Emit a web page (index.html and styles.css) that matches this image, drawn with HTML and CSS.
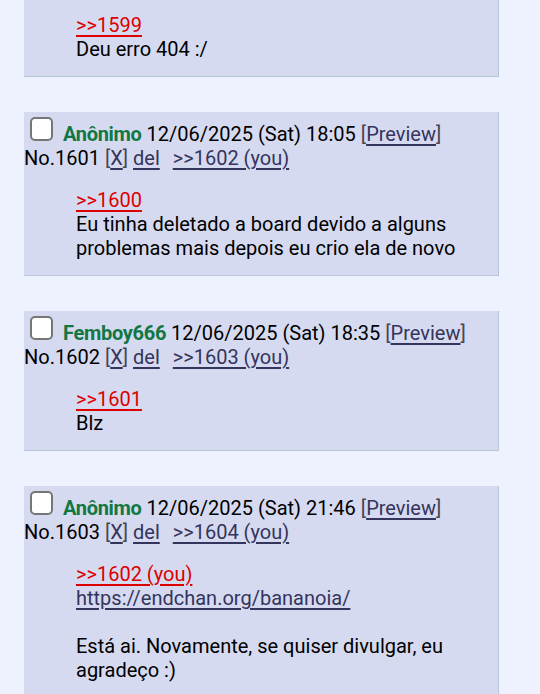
FILE: index.html
```html
<!DOCTYPE html>
<html lang="pt">
<head>
    <meta charset="UTF-8">
    <meta name="viewport" content="width=device-width, initial-scale=1.0">
    <title>/bananoia/ - Thread</title>
    <link rel="stylesheet" href="styles.css">
</head>
<body>
    <div class="thread">
        <div class="post-container">
            <div class="reply">
                <div class="post-info">
                    <input type="checkbox" class="post-check">
                    <span class="name">Anônimo</span>
                    <span class="date">12/06/2025 (Sat) 17:58</span>
                    <span class="bracket">[<a href="#">Preview</a>]</span>
                    <br>
                    <span class="post-num">No.1600</span>
                    <span class="bracket">[<a href="#">X</a>]</span>
                    <a href="#">del</a>
                    <span class="backlinks"><a href="#">&gt;&gt;1601</a></span>
                </div>
                <blockquote class="post-message">
                    <a href="#" class="quotelink">&gt;&gt;1599</a><br>
                    Deu erro 404 :/
                </blockquote>
            </div>
        </div>

        <div class="post-container">
            <div class="reply">
                <div class="post-info">
                    <input type="checkbox" class="post-check">
                    <span class="name">Anônimo</span>
                    <span class="date">12/06/2025 (Sat) 18:05</span>
                    <span class="bracket">[<a href="#">Preview</a>]</span>
                    <br>
                    <span class="post-num">No.1601</span>
                    <span class="bracket">[<a href="#">X</a>]</span>
                    <a href="#">del</a>
                    <span class="backlinks"><a href="#">&gt;&gt;1602 (you)</a></span>
                </div>
                <blockquote class="post-message">
                    <a href="#" class="quotelink">&gt;&gt;1600</a><br>
                    Eu tinha deletado a board devido a alguns problemas mais depois eu crio ela de novo
                </blockquote>
            </div>
        </div>

        <div class="post-container">
            <div class="reply">
                <div class="post-info">
                    <input type="checkbox" class="post-check">
                    <span class="name">Femboy666</span>
                    <span class="date">12/06/2025 (Sat) 18:35</span>
                    <span class="bracket">[<a href="#">Preview</a>]</span>
                    <br>
                    <span class="post-num">No.1602</span>
                    <span class="bracket">[<a href="#">X</a>]</span>
                    <a href="#">del</a>
                    <span class="backlinks"><a href="#">&gt;&gt;1603 (you)</a></span>
                </div>
                <blockquote class="post-message">
                    <a href="#" class="quotelink">&gt;&gt;1601</a><br>
                    Blz
                </blockquote>
            </div>
        </div>

        <div class="post-container">
            <div class="reply">
                <div class="post-info">
                    <input type="checkbox" class="post-check">
                    <span class="name">Anônimo</span>
                    <span class="date">12/06/2025 (Sat) 21:46</span>
                    <span class="bracket">[<a href="#">Preview</a>]</span>
                    <br>
                    <span class="post-num">No.1603</span>
                    <span class="bracket">[<a href="#">X</a>]</span>
                    <a href="#">del</a>
                    <span class="backlinks"><a href="#">&gt;&gt;1604 (you)</a></span>
                </div>
                <blockquote class="post-message">
                    <a href="#" class="quotelink">&gt;&gt;1602 (you)</a><br>
                    <a href="#">https://endchan.org/bananoia/</a><br>
                    <br>
                    Está ai. Novamente, se quiser divulgar, eu agradeço :)
                </blockquote>
            </div>
        </div>
    </div>
</body>
</html>
```

FILE: styles.css
```css
* {
    box-sizing: border-box;
}

body {
    margin: 0;
    background: #eef2ff;
    color: #000;
    font-family: Roboto, "Noto Sans", sans-serif;
    font-size: 20px;
    line-height: 24px;
    overflow: hidden;
}

a {
    color: #34345c;
    text-decoration: underline;
    text-decoration-thickness: 2px;
    text-underline-offset: 3px;
}

/* page is scrolled: first reply is only half visible */
.thread {
    margin-top: -63px;
}

.post-container {
    margin-bottom: 35px;
}

.reply {
    width: 475px;
    margin-left: 24px;
    background: #d6daf0;
    border-right: 1px solid #b7c5d9;
    border-bottom: 1px solid #b7c5d9;
}

.post-check {
    appearance: none;
    -webkit-appearance: none;
    width: 23px;
    height: 24px;
    margin: 5px 5px 0 6px;
    vertical-align: baseline;
    background: #fff;
    border: 2px solid #767676;
    border-radius: 5px;
}

.name {
    color: #117743;
    font-weight: 700;
    letter-spacing: -0.3px;
}

.bracket {
    color: #484850;
}

.backlinks {
    margin-left: 8px;
}

.post-message {
    margin: 18px 20px 15px 52px;
}

.quotelink {
    color: #d00;
}
```
